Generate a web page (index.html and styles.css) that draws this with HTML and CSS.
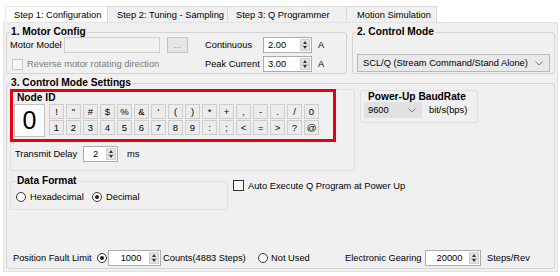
FILE: index.html
```html
<!DOCTYPE html>
<html lang="en">
<head>
    <meta charset="UTF-8">
    <title>Step 1: Configuration</title>
    <link rel="stylesheet" href="styles.css">
</head>
<body>
    <div class="window">
        <div class="tabs">
            <div class="tab active t1">Step 1: Configuration</div>
            <div class="tab t2">Step 2: Tuning - Sampling</div>
            <div class="tab t3">Step 3: Q Programmer</div>
            <div class="tab t4">Motion Simulation</div>
        </div>

        <div class="page">
            <div class="top-row">
                <fieldset class="group motor">
                    <legend>1. Motor Config</legend>
                    <div class="motor-body">
                        <div class="motor-left">
                            <div class="row">
                                <span class="lbl-model">Motor Model</span>
                                <span class="text-box disabled model-box"></span>
                                <span class="btn disabled dots">...</span>
                            </div>
                            <div class="row">
                                <span class="check disabled"></span>
                                <span class="muted reverse">Reverse motor rotating direction</span>
                            </div>
                        </div>
                        <div class="motor-right">
                            <span>Continuous</span>
                            <span class="spin w49"><span class="spin-val">2.00</span><span class="spin-btns"><i class="up"></i><i class="down"></i></span></span>
                            <span class="unit">A</span>
                            <span>Peak Current</span>
                            <span class="spin w49"><span class="spin-val">3.00</span><span class="spin-btns"><i class="up"></i><i class="down"></i></span></span>
                            <span class="unit">A</span>
                        </div>
                    </div>
                </fieldset>

                <fieldset class="group mode">
                    <legend>2. Control Mode</legend>
                    <div class="select mode-select">
                        <span>SCL/Q (Stream Command/Stand Alone)</span>
                        <svg width="8" height="5" viewBox="0 0 8 5"><polyline points="0.5,0.5 4,4 7.5,0.5" fill="none" stroke="#808080"/></svg>
                    </div>
                </fieldset>
            </div>

            <fieldset class="group settings">
                <legend>3. Control Mode Settings</legend>
                <div class="settings-body">
                    <div class="upper">
                        <div class="node-panel">
                            <div class="node-frame">
                                <div class="sub-title node-title">Node ID</div>
                                <div class="keypad">
                                    <div class="big-zero">0</div>
                                    <div class="keys">
                                        <span class="key">!</span><span class="key">"</span><span class="key">#</span><span class="key">$</span>
                                        <span class="key">%</span><span class="key">&amp;</span><span class="key">'</span><span class="key">(</span>
                                        <span class="key">)</span><span class="key">*</span><span class="key">+</span><span class="key">,</span>
                                        <span class="key">-</span><span class="key">.</span><span class="key">/</span><span class="key">0</span>
                                        <span class="key">1</span><span class="key">2</span><span class="key">3</span><span class="key">4</span>
                                        <span class="key">5</span><span class="key">6</span><span class="key">7</span><span class="key">8</span>
                                        <span class="key">9</span><span class="key">:</span><span class="key">;</span><span class="key">&lt;</span>
                                        <span class="key">=</span><span class="key">&gt;</span><span class="key">?</span><span class="key">@</span>
                                    </div>
                                </div>
                            </div>
                            <div class="row delay-row">
                                <span class="lbl-delay">Transmit Delay</span>
                                <span class="spin w35"><span class="spin-val delay-val">2</span><span class="spin-btns"><i class="up"></i><i class="down"></i></span></span>
                                <span class="ms">ms</span>
                            </div>
                        </div>

                        <div class="baud-group">
                            <div class="sub-title baud-title">Power-Up BaudRate</div>
                            <div class="row">
                                <div class="select baud-select">
                                    <span>9600</span>
                                    <svg width="8" height="5" viewBox="0 0 8 5"><polyline points="0.5,0.5 4,4 7.5,0.5" fill="none" stroke="#808080"/></svg>
                                </div>
                                <span class="bps">bit/s(bps)</span>
                            </div>
                        </div>
                    </div>

                    <div class="lower">
                        <fieldset class="data-group">
                            <legend>Data Format</legend>
                            <div class="row radios">
                                <span class="radio"></span><span class="radio-lbl hex">Hexadecimal</span>
                                <span class="radio checked"></span><span class="radio-lbl">Decimal</span>
                            </div>
                        </fieldset>
                        <div class="row auto-exec">
                            <span class="check"></span>
                            <span class="auto-lbl">Auto Execute Q Program at Power Up</span>
                        </div>
                    </div>

                    <div class="row bottom-row">
                        <span class="lbl-fault">Position Fault Limit</span>
                        <span class="radio checked"></span>
                        <span class="spin w53"><span class="spin-val center">1000</span><span class="spin-btns"><i class="up"></i><i class="down"></i></span></span>
                        <span class="counts">Counts(4883 Steps)</span>
                        <span class="radio"></span>
                        <span class="not-used">Not Used</span>
                        <span class="lbl-gear">Electronic Gearing</span>
                        <span class="spin w56"><span class="spin-val center">20000</span><span class="spin-btns"><i class="up"></i><i class="down"></i></span></span>
                        <span class="steps">Steps/Rev</span>
                    </div>
                </div>
            </fieldset>
        </div>
    </div>
</body>
</html>
```

FILE: styles.css
```css
:root {
    --panel: #f0f0f0;
    --group-line: #d3d3d3;
    --faint-line: #e0e0e0;
    --field-line: #acacac;
    --muted: #7a7a7a;
    --mark: #e60012;
}

* {
    box-sizing: border-box;
}

body {
    margin: 0;
    background: #fff;
    font-family: "Liberation Sans", Arial, sans-serif;
    font-size: 9.3px;
    line-height: 12px;
    color: #000;
}

.window {
    width: 560px;
    padding: 6px 0 0 3px;
}

/* tabs */

.tabs {
    display: flex;
    height: 16px;
    padding-left: 2px;
}

.tab {
    height: 16px;
    padding: 2px 0 0 8px;
    background: var(--panel);
    border: 1px solid #d9d9d9;
    border-bottom: none;
    margin-left: -1px;
    white-space: nowrap;
}

.tab.active {
    background: #fff;
    border-color: #e6e6e6;
    margin-left: 0;
}

.t1 { width: 103px; }
.t2 { width: 121px; padding-left: 9px; }
.t3 { width: 120px; }
.t4 { width: 91px; padding-left: 10px; }

.page {
    width: 555px;
    height: 250px;
    background: var(--panel);
    border: 1px solid #e2e2e2;
    padding: 3px 2px 0 2px;
}

/* group boxes */

.group {
    margin: 0;
    min-width: 0;
    border: 1px solid var(--group-line);
    border-radius: 3px;
    padding: 0 3px 1px 3px;
}

.group > legend {
    font-weight: bold;
    font-size: 10.2px;
    line-height: 12px;
    padding: 0 1px;
}

.row {
    display: flex;
    align-items: center;
    white-space: nowrap;
}

.top-row {
    display: flex;
    gap: 5px;
}

.motor {
    width: 341px;
    height: 48px;
}

.motor-body {
    display: flex;
    margin-top: -1px;
}

.motor-left {
    width: 195px;
    display: flex;
    flex-direction: column;
    gap: 3px;
}

.motor-left .row {
    height: 16px;
}

.lbl-model {
    width: 54px;
}

.model-box {
    width: 96px;
}

.dots {
    width: 21px;
    margin-left: 7px;
}

.motor-right {
    display: grid;
    grid-template-columns: 58px 49px auto;
    grid-auto-rows: 16px;
    row-gap: 3px;
    align-items: center;
}

.unit {
    margin-left: 6px;
}

.reverse {
    margin-left: 4px;
}

.mode {
    width: 203px;
    height: 48px;
}

.mode-select {
    width: 193px;
    height: 18px;
    margin: 16px 0 0 1px;
}

/* controls */

.text-box {
    display: block;
    height: 16px;
    background: #fff;
    border: 1px solid var(--field-line);
}

.text-box.disabled {
    background: var(--panel);
    border-color: #cfcfcf;
}

.btn {
    display: flex;
    align-items: center;
    justify-content: center;
    height: 16px;
    background: #e6e6e6;
    border: 1px solid #c4c4c4;
}

.btn.disabled {
    color: #9a9a9a;
}

.muted {
    color: var(--muted);
}

.check {
    display: inline-block;
    width: 11px;
    height: 11px;
    background: #fff;
    border: 1px solid #333;
}

.check.disabled {
    border-color: #c8c8c8;
    background: #f7f7f7;
    margin-left: 2px;
}

.radio {
    position: relative;
    display: inline-block;
    width: 10px;
    height: 10px;
    border: 1px solid #333;
    border-radius: 50%;
    background: #fff;
}

.radio.checked::after {
    content: "";
    position: absolute;
    left: 2px;
    top: 2px;
    width: 4px;
    height: 4px;
    border-radius: 50%;
    background: #222;
}

.spin {
    display: flex;
    height: 16px;
    background: #fff;
    border: 1px solid var(--field-line);
    padding: 1px;
}

.w35 { width: 35px; }
.w49 { width: 49px; }
.w53 { width: 53px; }
.w56 { width: 56px; }

.spin-val {
    flex: 1;
    padding-left: 3px;
    line-height: 12px;
}

.spin-val.center {
    text-align: center;
}

.spin-btns {
    width: 10px;
    display: flex;
    flex-direction: column;
    background: #e3e3e3;
    border: 1px solid #d0d0d0;
}

.spin-btns i {
    flex: 1;
    display: flex;
    align-items: center;
    justify-content: center;
}

.spin-btns i::before {
    content: "";
    border-left: 2.5px solid transparent;
    border-right: 2.5px solid transparent;
}

.spin-btns .up::before {
    border-bottom: 3px solid #333;
}

.spin-btns .down {
    border-top: 1px solid #c8c8c8;
}

.spin-btns .down::before {
    border-top: 3px solid #333;
}

.select {
    display: flex;
    align-items: center;
    justify-content: space-between;
    padding: 0 6px 0 5px;
    background: #e9e9e9;
    border: 1px solid #b8b8b8;
}

/* control mode settings */

.settings {
    height: 192px;
    margin-top: 3px;
}

.settings-body {
    display: flex;
    flex-direction: column;
    height: 178px;
}

.upper {
    display: flex;
    gap: 5px;
    align-items: flex-start;
}

.node-panel {
    width: 345px;
    border: 1px solid var(--faint-line);
    border-radius: 2px;
    padding-bottom: 8px;
}

.node-frame {
    width: 326px;
    margin: -1px 0 0 -1px;
    border: 3px solid var(--mark);
    padding: 0 0 2px 1px;
}

.sub-title {
    font-weight: bold;
    font-size: 10.2px;
}

.node-title {
    height: 12px;
    margin-left: 3px;
}

.keypad {
    display: flex;
    align-items: flex-start;
    gap: 4px;
}

.big-zero {
    width: 31px;
    height: 33px;
    background: #fff;
    border: 1px solid #c2c2c2;
    font-size: 25px;
    line-height: 31px;
    text-align: center;
}

.keys {
    display: grid;
    grid-template-columns: repeat(16, 15px);
    grid-auto-rows: 15px;
    gap: 1px 2px;
}

.key {
    display: flex;
    align-items: center;
    justify-content: center;
    background: #ececec;
    border: 1px solid #cdcdcd;
    font-size: 9.5px;
}

.delay-row {
    height: 16px;
    margin-top: 4px;
    padding-left: 4px;
}

.lbl-delay {
    width: 68px;
}

.delay-val {
    padding-left: 8px;
}

.ms {
    margin-left: 9px;
}

.baud-group {
    width: 118px;
    height: 33px;
    margin-top: 1px;
    border: 1px solid var(--faint-line);
    border-radius: 2px;
    padding: 0 0 0 3px;
}

.baud-title {
    height: 11px;
    line-height: 11px;
    padding-left: 4px;
}

.baud-select {
    width: 58px;
    height: 16px;
    padding: 0 5px 0 3px;
    background: #e1e1e1;
    border-color: #e1e1e1;
}

.bps {
    margin-left: 7px;
}

.lower {
    display: flex;
    gap: 5px;
    margin-top: 4px;
}

.data-group {
    width: 218px;
    height: 35px;
    margin: 0;
    min-width: 0;
    border: 1px solid var(--faint-line);
    border-radius: 2px;
    padding: 0 4px 0 5px;
}

.data-group > legend {
    font-weight: bold;
    font-size: 10.2px;
    line-height: 12px;
    padding: 0 1px;
}

.radios {
    height: 13px;
    margin-top: 3px;
}

.radio-lbl {
    margin-left: 4px;
}

.hex {
    width: 62px;
}

.auto-exec {
    height: 11px;
    margin-top: 5px;
}

.auto-lbl {
    margin-left: 4px;
}

.bottom-row {
    height: 16px;
    margin-top: auto;
    margin-bottom: 1px;
    padding-left: 3px;
}

.lbl-fault {
    width: 84px;
}

.spin.w53 {
    margin-left: 1px;
}

.counts {
    width: 95px;
    margin-left: 2px;
}

.not-used {
    width: 74px;
    margin-left: 3px;
}

.lbl-gear {
    width: 80px;
}

.steps {
    margin-left: 6px;
}
```
